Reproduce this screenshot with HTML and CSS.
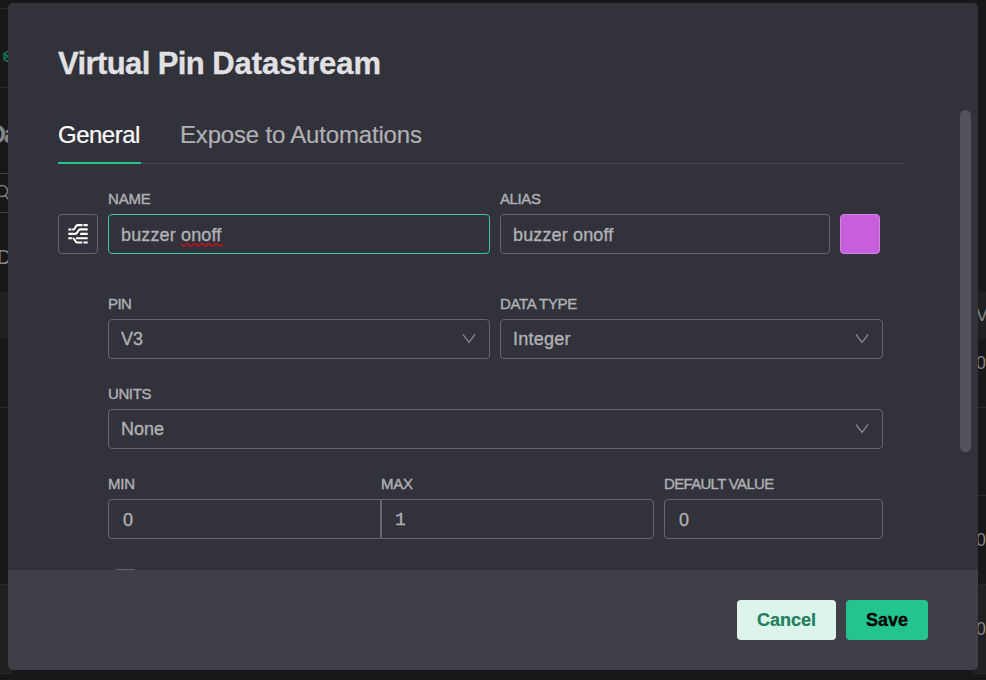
FILE: index.html
```
<!DOCTYPE html>
<html lang="en">
<head>
<meta charset="utf-8">
<title>Virtual Pin Datastream</title>
<link rel="stylesheet" href="styles.css">
</head>
<body>
<div class="page">
  <div class="edge edge-left">
    <div class="cell top"></div>
    <div class="cell brand"><svg width="12" height="14" viewBox="0 0 12 14"><path d="M9 1 4 3.5v6L9 12M4 4l5 3M4 9l5-4" fill="none" stroke="#137552" stroke-width="1.5"/></svg></div>
    <div class="cell heading"><span>Da</span></div>
    <div class="cell search"><svg width="12" height="20" viewBox="0 0 12 20"><circle cx="2" cy="8" r="5.5" fill="none" stroke="#77777b" stroke-width="1.6"/><path d="m5 12 4 5" stroke="#77777b" stroke-width="1.6"/></svg></div>
    <div class="cell devices"><span>D</span></div>
    <div class="cell band"></div>
    <div class="cell row1"></div>
    <div class="cell row-tall"></div>
    <div class="cell row-last"></div>
    <div class="cell bottom"></div>
  </div>
  <div class="edge edge-right">
    <div class="cell blank"></div>
    <div class="cell band"><span>V</span></div>
    <div class="cell row1"><span>0</span></div>
    <div class="cell row2"></div>
    <div class="cell row3"><span>0</span></div>
    <div class="cell row-last"><span>0</span></div>
    <div class="cell bottom"></div>
  </div>
  <main class="modal">
    <div class="body">
      <div class="content">
        <h1>Virtual Pin <span>Datastream</span></h1>
        <nav class="tabs"><span class="tab active">General</span><span class="tab">Expose to Automations</span></nav>
        <div class="form">
          <div class="row name-row">
            <div class="icon-box"><svg width="20" height="20" viewBox="0 0 20 20" fill="none" stroke="#fff" stroke-width="2.1"><path d="M.3 5.5h3.2M4.1 5.5h1C8 5.5 6.8 1.1 9.5 1.1h5M15.5 1.1h4.2M.3 9.9h6.5c4.2 0 2.2-4.5 5.5-4.5h7.4M12.2 9.9h7.5M.3 14.2h3.6M4.6 14.2c3 0 1.7 4.3 4.7 4.3h5M15.5 18.5h4.2M8 14.2h11.7"/></svg></div>
            <div class="field w-name"><label class="l-name">NAME</label><div class="box focus text-wide">buzzer <span class="misspelt">onoff<svg class="wave" width="42" height="4" viewBox="0 0 42 4"><path d="m0 .8 2 2.2h1.5L5.7.8h1.5l2 2.2h1.5L13 .8h1.5l2 2.2H18L20.2.8h1.5l2 2.2h1.5L27.4.8h1.5l2 2.2h1.5L34.7.8h1.5l2 2.2h1.5L41.5.8" fill="none" stroke="#e30a12" stroke-width="1.2"/></svg></span></div></div>
            <div class="field w-alias"><label class="l-alias">ALIAS</label><div class="box text-wide">buzzer onoff</div></div>
            <div class="swatch"></div>
          </div>
          <div class="row pin-row">
            <div class="field w-name"><label class="l-pin">PIN</label><div class="box select">V3<svg class="chev" width="14" height="10" viewBox="0 0 14 10"><path d="m1 .5 6 8 6-8"/></svg></div></div>
            <div class="field w-type"><label class="l-type">DATA TYPE</label><div class="box select integer">Integer<svg class="chev" width="14" height="10" viewBox="0 0 14 10"><path d="m1 .5 6 8 6-8"/></svg></div></div>
          </div>
          <div class="row units-row">
            <div class="field w-full"><label class="l-units">UNITS</label><div class="box select">None<svg class="chev" width="14" height="10" viewBox="0 0 14 10"><path d="m1 .5 6 8 6-8"/></svg></div></div>
          </div>
          <div class="row range-row">
            <div class="field w-min"><label class="l-min">MIN</label><div class="box num">0</div></div>
            <div class="field w-max"><label class="l-max">MAX</label><div class="box num one">1</div></div>
            <div class="field w-default"><label class="l-default">DEFAULT VALUE</label><div class="box num">0</div></div>
          </div>
          <div class="checkbox"></div>
        </div>
      </div>
      <div class="scrollbar"></div>
    </div>
    <footer><button class="cancel">Cancel</button><button class="save">Save</button></footer>
  </main>
</div>
</body>
</html>
```
FILE: styles.css
```
* { box-sizing: border-box; }
body { margin: 0; background: #18181a; font-family: "Liberation Sans", Arial, sans-serif; }
.page { position: relative; display: flex; justify-content: space-between; width: 986px; height: 680px; overflow: hidden; }

.edge { display: flex; flex-direction: column; width: 12px; overflow: hidden; color: #858587; font-size: 18px; }
.cell { display: flex; align-items: center; flex: none; border-bottom: 1px solid #29292b; }
.edge-left .top { height: 9px; }
.edge-left .brand { height: 79px; padding-top: 18px; }
.edge-left .heading { height: 86px; border-color: #424246; font-size: 25px; font-weight: bold; }
.heading span { margin-left: -12px; padding-top: 8px; letter-spacing: -2px; }
.edge-left .search { height: 39px; border-color: #424246; }
.edge-left .devices { height: 79px; border: 0; font-size: 20px; padding-top: 10px; }
.devices span { margin-left: -3px; }
.edge .band { height: 47px; background: #202022; border-color: #202022; }
.edge .row1 { height: 69px; }
.edge .row-tall { height: 177px; }
.edge .row2 { height: 88px; }
.edge .row3 { height: 89px; }
.edge .row-last { height: 89px; background: #202022; }
.edge .bottom { flex: 1; border: 0; background: #18181a; }
.edge-right .blank { height: 292px; border: 0; }
.edge-right span { margin-left: 2px; padding-top: 1px; }
.edge-right .row1 { padding-bottom: 21px; }

.modal { position: absolute; left: 8px; top: 3px; width: 970px; height: 667px; display: flex; flex-direction: column; border-radius: 5px; overflow: hidden; background: #32323b; }
.body { display: flex; justify-content: space-between; height: 567px; overflow: hidden; }
.content { width: 845px; margin-left: 50px; padding-top: 42px; }
h1 { margin: 0; height: 37px; line-height: 38px; font-size: 31px; color: #e1e1e3; letter-spacing: -0.6px; word-spacing: 0; white-space: nowrap; -webkit-text-stroke: 0.3px #e1e1e3; }
h1 span { letter-spacing: 0; }
.tabs { display: flex; gap: 39px; height: 58px; margin-top: 24px; border-bottom: 1px solid #4c4b54; }
.tab { height: 58px; line-height: 58px; font-size: 24px; color: #b0b0b4; letter-spacing: -0.18px; white-space: nowrap; -webkit-text-stroke: 0.2px #b0b0b4; }
.tab.active { width: 83px; color: #fff; letter-spacing: -0.5px; border-bottom: 2px solid #24c48e; -webkit-text-stroke: 0.2px #fff; }

.row { display: flex; gap: 10px; margin-left: 50px; }
.name-row { margin-left: 0; margin-top: 25px; height: 65px; align-items: flex-end; }
.pin-row { margin-top: 40px; }
.units-row, .range-row { margin-top: 25px; }
.field { flex: none; }
.w-name { width: 382px; }
.w-alias { width: 330px; }
.w-type { width: 383px; }
.w-full { width: 775px; }
.w-min { width: 273px; }
.w-max { width: 273px; margin-left: -10px; }
.w-default { width: 219px; }
label { display: block; height: 25px; line-height: 20px; font-size: 15px; color: #b0b0b3; white-space: nowrap; -webkit-text-stroke: 0.4px #b0b0b3; }
.l-name { letter-spacing: -0.2px; }
.l-alias { letter-spacing: -0.4px; }
.l-pin { letter-spacing: -0.6px; }
.l-type { letter-spacing: -0.35px; }
.l-units { letter-spacing: -0.4px; }
.l-min { letter-spacing: -0.2px; }
.l-max { letter-spacing: -0.2px; }
.l-default { letter-spacing: -0.68px; }
.box { height: 40px; padding: 0 13px 0 12px; line-height: 40px; border: 1px solid #66666f; border-radius: 4px; color: #b0b0b3; font-size: 18px; -webkit-text-stroke: 0.35px #b0b0b3; }
.focus { border-color: #42c49c; }
.text-wide { letter-spacing: 0.14px; }
.integer { letter-spacing: 0.25px; }
.select { display: flex; justify-content: space-between; align-items: center; line-height: 38px; }
.chev { fill: none; stroke: #85848d; stroke-width: 1.3; }
.num { padding-left: 14px; }
.w-min .box { border-radius: 4px 0 0 4px; }
.w-max .box { border-radius: 0 4px 4px 0; }
.one { padding-left: 13px; font-family: "Liberation Mono", monospace; }
.icon-box { display: flex; align-items: center; justify-content: center; width: 40px; height: 40px; border: 1px solid #66666f; border-radius: 4px; }
.swatch { width: 40px; height: 40px; border: 1px solid #d483e5; border-radius: 4px; background: #c75fdc; }
.misspelt { position: relative; display: inline-block; line-height: 20px; }
.wave { position: absolute; left: 0; bottom: -2px; }
.checkbox { width: 24px; height: 24px; margin: 30px 0 0 55px; border: 1px solid #66666f; border-radius: 4px; }
.scrollbar { width: 11px; height: 342px; margin: 107px 7px 0 0; border-radius: 6px; background: #53535b; }

footer { display: flex; justify-content: flex-end; gap: 10px; height: 100px; padding: 30px 50px; background: #3f3f47; }
button { height: 40px; padding: 0; border: 0; border-radius: 4px; font: bold 18px/40px "Liberation Sans", Arial, sans-serif; }
.cancel { width: 99px; color: #207d5e; background: #dcf4eb; -webkit-text-stroke: 0.2px #207d5e; }
.save { width: 82px; color: #000; background: #24c48e; -webkit-text-stroke: 0.3px #000; }
```
